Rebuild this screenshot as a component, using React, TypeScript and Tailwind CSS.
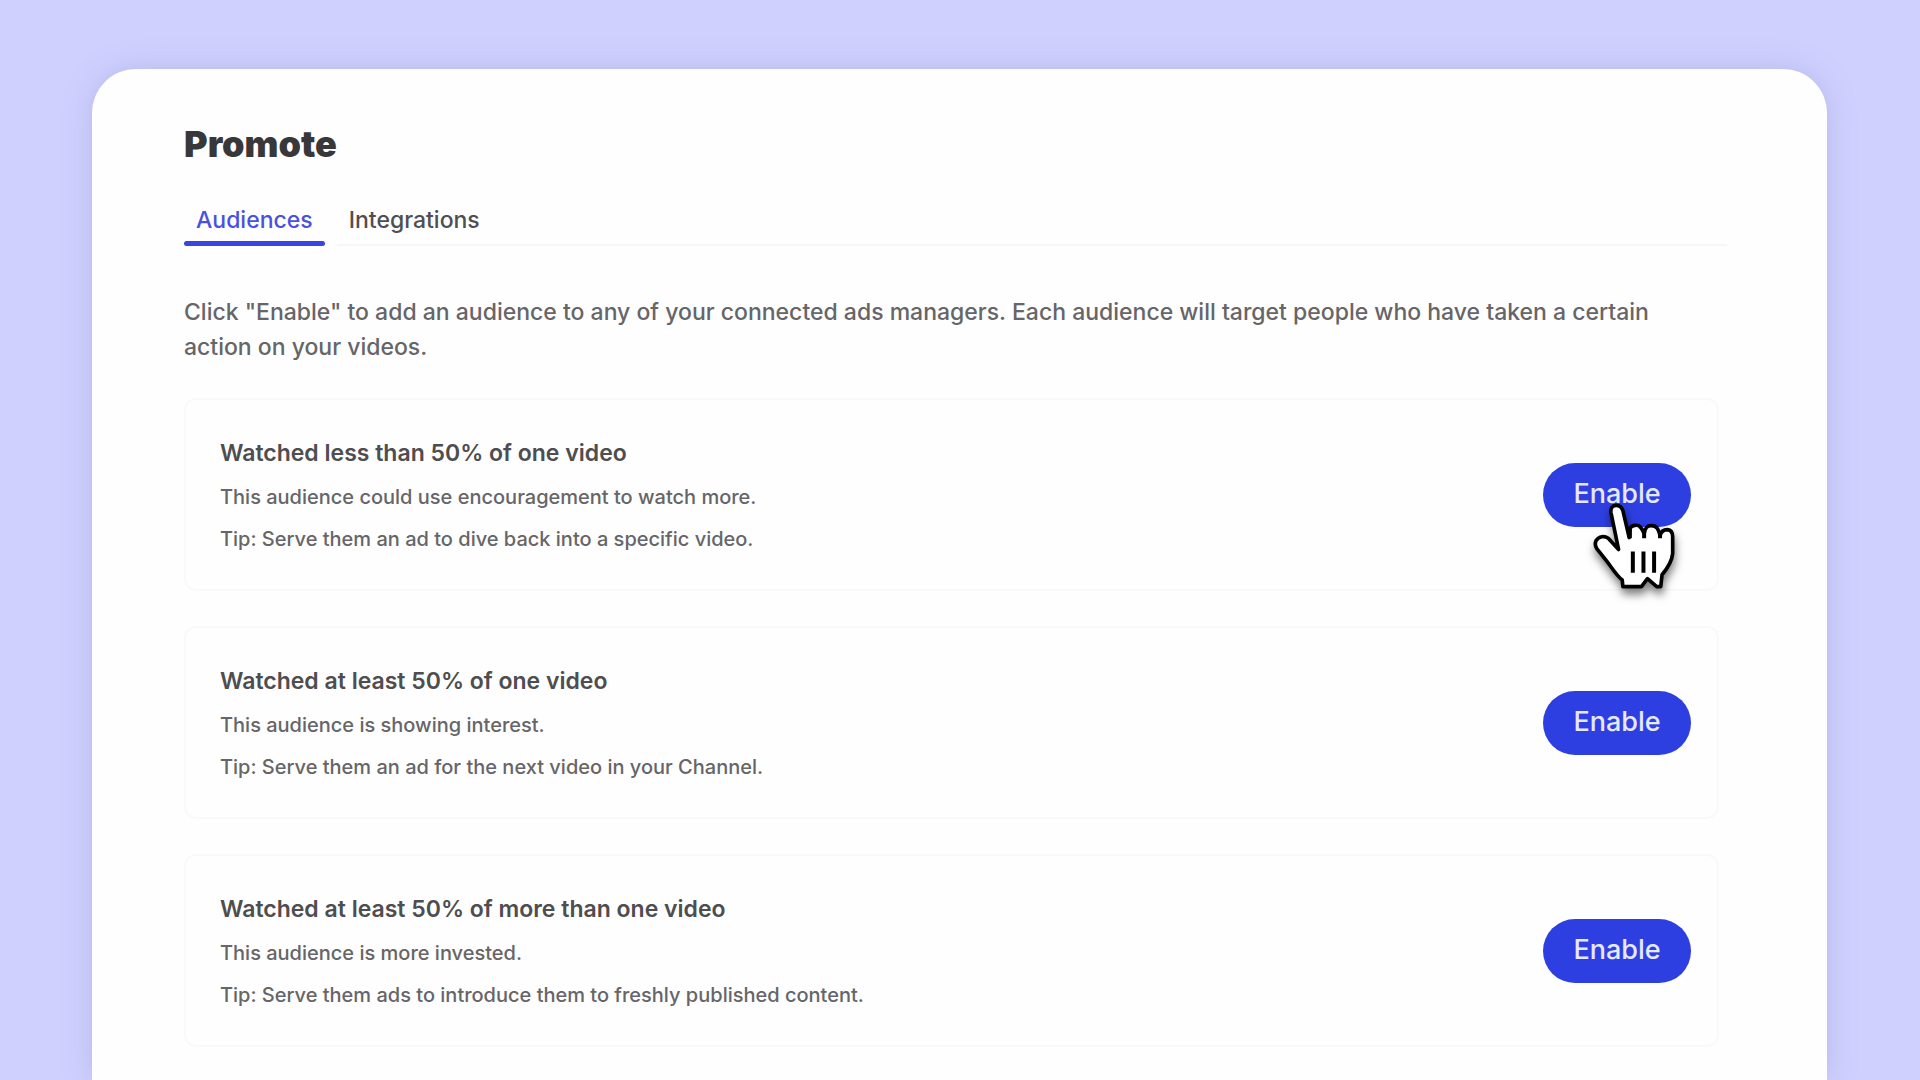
interface Audience {
  id: number;
  title: string;
  description: string;
  tip: string;
}

const audiences: Audience[] = [
  {
    id: 1,
    title: "Watched less than 50% of one video",
    description: "This audience could use encouragement to watch more.",
    tip: "Tip: Serve them an ad to dive back into a specific video.",
  },
  {
    id: 2,
    title: "Watched at least 50% of one video",
    description: "This audience is showing interest.",
    tip: "Tip: Serve them an ad for the next video in your Channel.",
  },
  {
    id: 3,
    title: "Watched at least 50% of more than one video",
    description: "This audience is more invested.",
    tip: "Tip: Serve them ads to introduce them to freshly published content.",
  },
];

function HandCursor() {
  return (
    <svg
      className="pointer-events-none absolute left-[50px] top-[39px] h-[88px] w-[83px] overflow-visible drop-shadow-[1px_6px_4px_rgba(0,0,0,0.5)]"
      viewBox="280 365 250 265"
      aria-hidden="true"
    >
      <path
        d="M334 396C332 382 340 375 350 375C360 375 367 381 370 391L389 472L391 446C395 434 416 432 422 440C428 446 430 452 434 460C438 442 442 436 456 436C472 436 477 446 482 466C485 454 492 448 504 448C517 449 520 458 520 470V520C518 542 508 560 488 584L484 620H472L444 596L426 620H370L368 600C352 588 336 562 322 544L292 506C286 498 286 488 290 480C298 468 314 466 326 474L357 508Z"
        fill="#fff"
        stroke="#000"
        strokeWidth="11"
        strokeLinejoin="round"
      />
      <path
        d="M391 446V474M434 456V474M482 462V474M400 514V578M432 514V578M464 514V578"
        fill="none"
        stroke="#000"
        strokeWidth="12"
      />
    </svg>
  );
}

function AudienceCard({ audience, hovered }: { audience: Audience; hovered: boolean }) {
  return (
    <li className="flex items-center justify-between rounded-xl border-2 border-[#faf8fd] pt-[35px] pr-[26px] pb-[29px] pl-[34px]">
      <div>
        <h2 className="mb-[5px] text-[23px] leading-9 font-semibold text-[#4e4d50]">{audience.title}</h2>
        <p className="text-[20px] leading-[42px] font-medium text-[#666568]">{audience.description}</p>
        <p className="text-[20px] leading-[42px] font-medium text-[#666568]">{audience.tip}</p>
      </div>
      <div className="relative mb-1.5 shrink-0">
        <button
          type="button"
          className="block h-16 w-[148px] cursor-pointer rounded-full bg-[#2d3fe0] text-[27px] font-medium text-[#e6e8ff]"
        >
          Enable
        </button>
        {hovered && <HandCursor />}
      </div>
    </li>
  );
}

export default function App() {
  return (
    <div className="flex min-h-screen flex-col bg-[#d0d0ff] pt-[69px] pr-[93px] pl-[92px] font-['Inter',sans-serif]">
      <main className="flex-1 rounded-t-[44px] bg-[#fefefe] pt-[51px] pr-[108px] pb-8 pl-[92px] shadow-[0_0_28px_rgba(130,145,190,0.35)]">
        <h1 className="text-[36px] leading-[48px] font-black text-[#38373a]">Promote</h1>

        <nav className="mt-9 -mr-2 flex gap-3 text-[23px] leading-8 font-medium">
          <button type="button" className="cursor-pointer text-[#4a50e2]">
            <span className="block px-3 pb-[5px]">Audiences</span>
            <span className="block h-[5px] rounded-full bg-[#3a45df]" />
          </button>
          <div className="flex-1 border-b-2 border-[#f8f5fb]">
            <button type="button" className="cursor-pointer px-3 text-[#4f4e51]">
              Integrations
            </button>
          </div>
        </nav>

        <p className="mt-[49px] text-[23px] leading-[35px] font-medium text-[#666568]">
          Click "Enable" to add an audience to any of your connected ads managers. Each audience will
          target people who have taken a certain action on your videos.
        </p>

        <ul className="mt-[33px] flex flex-col gap-[35px]">
          {audiences.map((audience) => (
            <AudienceCard key={audience.id} audience={audience} hovered={audience.id === 1} />
          ))}
        </ul>
      </main>
    </div>
  );
}
